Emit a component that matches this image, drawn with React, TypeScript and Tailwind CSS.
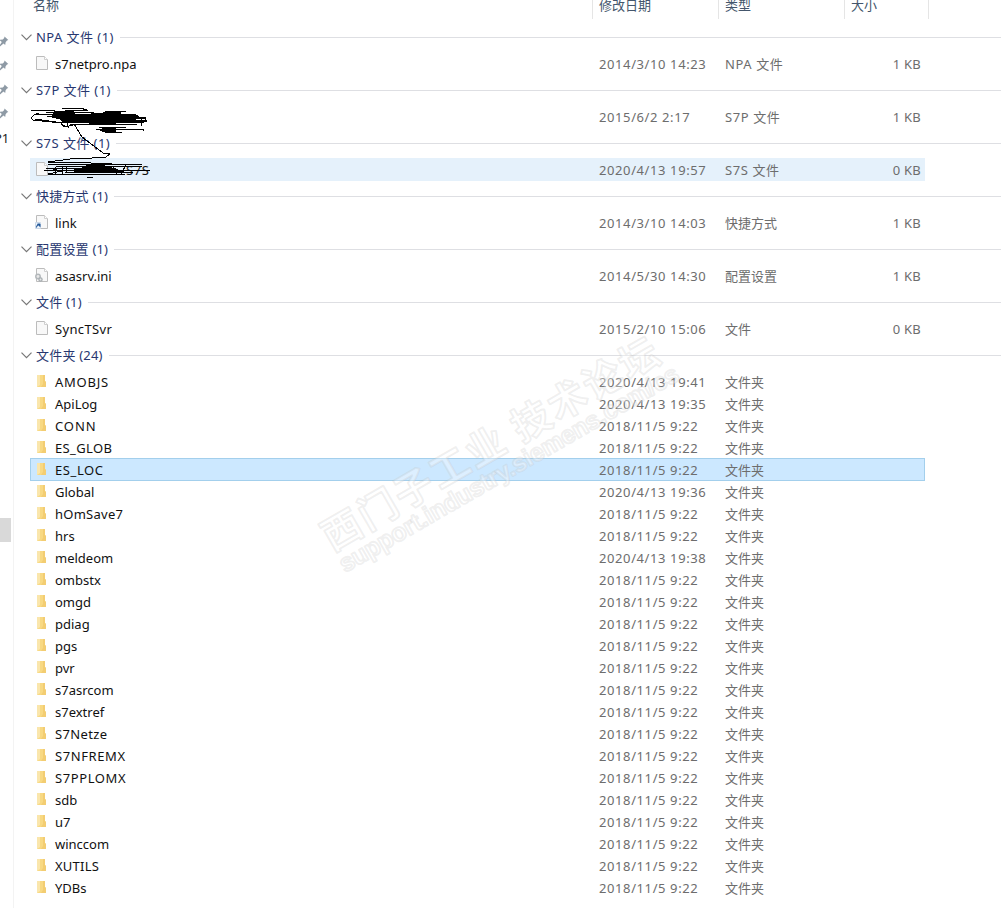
import clsx from "clsx";

type Entry = {
  name: string;
  date: string;
  type: string;
  size?: string;
  icon: "file" | "link" | "ini" | "folder" | "none";
  state?: "hover" | "selected";
};

type Group = { title: string; items: Entry[] };

const folder = (name: string, date = "2018/11/5 9:22"): Entry => ({
  name,
  date,
  type: "文件夹",
  icon: "folder",
});

const groups: Group[] = [
  {
    title: "NPA 文件 (1)",
    items: [{ name: "s7netpro.npa", date: "2014/3/10 14:23", type: "NPA 文件", size: "1 KB", icon: "file" }],
  },
  {
    title: "S7P 文件 (1)",
    items: [{ name: "", date: "2015/6/2 2:17", type: "S7P 文件", size: "1 KB", icon: "none" }],
  },
  {
    title: "S7S 文件 (1)",
    items: [{ name: "S7S", date: "2020/4/13 19:57", type: "S7S 文件", size: "0 KB", icon: "file", state: "hover" }],
  },
  {
    title: "快捷方式 (1)",
    items: [{ name: "link", date: "2014/3/10 14:03", type: "快捷方式", size: "1 KB", icon: "link" }],
  },
  {
    title: "配置设置 (1)",
    items: [{ name: "asasrv.ini", date: "2014/5/30 14:30", type: "配置设置", size: "1 KB", icon: "ini" }],
  },
  {
    title: "文件 (1)",
    items: [{ name: "SyncTSvr", date: "2015/2/10 15:06", type: "文件", size: "0 KB", icon: "file" }],
  },
  {
    title: "文件夹 (24)",
    items: [
      folder("AMOBJS", "2020/4/13 19:41"),
      folder("ApiLog", "2020/4/13 19:35"),
      folder("CONN"),
      folder("ES_GLOB"),
      { ...folder("ES_LOC"), state: "selected" },
      folder("Global", "2020/4/13 19:36"),
      folder("hOmSave7"),
      folder("hrs"),
      folder("meldeom", "2020/4/13 19:38"),
      folder("ombstx"),
      folder("omgd"),
      folder("pdiag"),
      folder("pgs"),
      folder("pvr"),
      folder("s7asrcom"),
      folder("s7extref"),
      folder("S7Netze"),
      folder("S7NFREMX"),
      folder("S7PPLOMX"),
      folder("sdb"),
      folder("u7"),
      folder("winccom"),
      folder("XUTILS"),
      folder("YDBs"),
    ],
  },
];

// the capitals run a little wider than the lower case
function nameTracking(name: string) {
  if (name === "AMOBJS") return "tracking-[0.75px]";
  if (name === "XUTILS") return "tracking-[0.25px]";
  if (name === "CONN") return "tracking-[0.9px]";
  if (name === "ES_GLOB") return "tracking-[0.35px]";
  if (/^[A-Z0-9_]+$/.test(name)) return "tracking-[0.6px]";
  if (name === "SyncTSvr" || name === "S7Netze") return "tracking-[0.35px]";
  if (name === "hOmSave7") return "tracking-[0.25px]";
  return "tracking-normal";
}

function EntryIcon({ kind }: { kind: Entry["icon"] }) {
  if (kind === "none") return <span className="w-4 shrink-0" />;
  if (kind === "folder") {
    return (
      <svg width="16" height="16" viewBox="0 0 16 16" className="-mt-0.5 shrink-0">
        <path d="M3 2h8v6l1 1v5H3z" fill="#f8d983" />
        <path d="M3 2h3v10l-3 2z" fill="#fae6ac" />
        <path d="M9 2h2v6l1 1v5H7l2-3z" fill="#f3cd72" />
      </svg>
    );
  }
  return (
    <svg width="16" height="16" viewBox="0 0 16 16" className="-mt-0.5 shrink-0">
      <path d="M2.500 1.500h8l3 3v10h-11z" fill="#f8f8f8" stroke="#bcbcbc" />
      <path d="M10.500 1.500v3h3" fill="#fff" stroke="#cfcfcf" />
      {kind === "link" && (
        <>
          <path d="M1.500 8.500h5v6h-5z" fill="#edf3fa" stroke="#cbd8e8" />
          <path d="M2.500 13.500c0-2 .8-2.700 2-2.700M3.500 10H6v2.500z" fill="#255a9b" stroke="#255a9b" />
        </>
      )}
      {kind === "ini" && (
        <>
          <circle cx="4" cy="9.500" r="2.200" fill="#e8e8e8" stroke="#b3b8bb" strokeWidth="1.500" />
          <circle cx="6.500" cy="12.500" r="1.600" fill="#e8e8e8" stroke="#a8aeb2" strokeWidth="1.300" />
        </>
      )}
    </svg>
  );
}

function Pin() {
  return (
    <svg width="9" height="11" viewBox="0 0 9 11" className="block">
      <path d="M4.500 .5 8.300 4 7 4.600 5.600 6.300 5.200 9 3.500 7.500 0 10.500V8.800L1.800 6 0 4.600V3.700l2.800-.3L4.200 2z" fill="#8e9aa5" />
    </svg>
  );
}

function Row({ entry }: { entry: Entry }) {
  return (
    <div
      className={clsx(
        "-mt-px ml-[16px] flex h-[23px] w-[895px] items-center border pl-[3px] whitespace-pre",
        entry.state === "hover" && "border-[#e5f1fb] bg-[#e5f1fb]",
        entry.state === "selected" && "border-[#a3cfec] bg-[#cce8ff]",
        !entry.state && "border-transparent",
      )}
    >
      <EntryIcon kind={entry.icon} />
      <span
        className={clsx(
          "w-[549px] shrink-0 text-[#111]",
          entry.name === "S7S" ? "pl-[76px]" : "pl-[5px]",
          nameTracking(entry.name),
        )}
      >
        {entry.name}
      </span>
      <span className="w-[126px] shrink-0 text-[#6d6d6d] tracking-[0.6px]">{entry.date}</span>
      <span className={clsx("w-[126px] shrink-0 text-[#6d6d6d]", /^[A-Z]/.test(entry.type) && "tracking-[0.6px]")}>
        {entry.type}
      </span>
      <span className="w-[70px] shrink-0 text-right text-[#6d6d6d] tracking-[0.25px]">{entry.size}</span>
    </div>
  );
}

// hand-drawn strokes that hide two of the names
function Scribbles() {
  return (
    <svg
      width="160"
      height="90"
      viewBox="0 100 160 90"
      className="pointer-events-none absolute top-[100px] left-0"
      fill="none"
      stroke="#000"
      shapeRendering="crispEdges"
    >
      <path d="M31 110.500h24M62 108.500h20l6 2H65M46 112.500h48M39 113c-6 1-9 5-6 7l28 3 3 4 14-3M34 114.500h95M35 119l28 4M47 116h92M60 122h84M62 125l6 2-1-5M110 111.500h16M120 114h14M100 116h37l-13 2h20M110 120h37M70 124h67M99 127.500h27M96 129.500h47v1M100 131l11-2h22M105 132.500h17M74 124l8 13 12 9 9 7 7 1-4 3-14 1-22 1-22 3" />
      <path d="M55 111h18l2 3h16l12-1 4-2h12l2 3h14v8l-10-1-8 2-9-1-17 1-12-1-6-1-10 1-3-3-8-2z" fill="#000" />
      <path d="M69 115h20v7h-20zM90 116h25v8H90zM118 116h20M122 118h24M119 121h28" strokeWidth="2" />
      <path d="M141.500 117v9M142 117.500h3.500v4H142" />
      <path d="M102 128h13v3h-13" fill="#000" />
      <path d="M48 162.500h43M48 164.500h94M91 163.500h19M56 166.500h86M46 168.500h60M44 170.500h106M50 174.500h75M65 172.500h68M48 168l14 3-14 3h75M87 177.500h6M55 167v7M62 166v8M66 166v7M126 165l-5 9M113 166l4 8" />
      <path d="M74 168h8l6-3h15l4 2 9 2 4 3H84l-10-1z" fill="#000" />
      <path d="M74 170h44M92 164h20M104 172h20" strokeWidth="2" />
    </svg>
  );
}

function Watermark() {
  return (
    <svg
      width="400"
      height="280"
      viewBox="300 320 400 280"
      className="pointer-events-none absolute top-[320px] left-[300px]"
    >
      <g fill="#fff" fillOpacity="0.35" stroke="#bdbdbd" strokeOpacity="0.24" strokeWidth="1.800" strokeLinejoin="round">
        <text
          transform="translate(332 552) rotate(-30)"
          textLength="382"
          className="font-['Noto_Sans_CJK_SC',sans-serif] text-[39px] font-bold"
        >
          西门子工业 技术论坛
        </text>
        <text
          transform="translate(345 573) rotate(-30)"
          textLength="388"
          className="font-['Liberation_Sans',sans-serif] text-[25px] font-bold"
        >
          support.industry.siemens.com/cs
        </text>
      </g>
    </svg>
  );
}

export default function App() {
  return (
    <div className="relative flex h-[908px] w-[1001px] overflow-hidden bg-white font-['Noto_Sans','Noto_Sans_CJK_SC',sans-serif] text-[13px] leading-[20px]">
      <aside className="flex w-[14px] shrink-0 flex-col overflow-hidden border-r border-[#f3f3f3] pt-[36px]">
        <div className="flex flex-col gap-[13px]">
          <Pin />
          <Pin />
          <Pin />
          <Pin />
        </div>
        <div className="mt-[9px] -ml-[6px] whitespace-nowrap text-[#222]">P1</div>
        <div className="mt-[370px] h-6 w-[11px] shrink-0 bg-[#d9d9d9]" />
      </aside>

      <main className="min-w-0 flex-1">
        <header className="flex h-[22px] text-[#44566c]">
          <div className="-mt-[5px] h-6 w-[579px] border-r border-[#e5e5e5] pl-[19px]">名称</div>
          <div className="-mt-[5px] h-6 w-[126px] border-r border-[#e5e5e5] pl-[6px]">修改日期</div>
          <div className="-mt-[5px] h-6 w-[126px] border-r border-[#e5e5e5] pl-[6px]">类型</div>
          <div className="-mt-[5px] h-6 w-[84px] border-r border-[#e5e5e5] pl-[6px]">大小</div>
        </header>

        {groups.map((group) => (
          <section key={group.title}>
            <div className="flex h-[31px] items-center pl-[7px] text-[#27376f]">
              <svg width="11" height="7" viewBox="0 0 11 7" fill="none" stroke="#777" strokeWidth="1.200" className="mr-1">
                <path d="M.5.700 5.500 5.700l5-5" />
              </svg>
              <span
                className={clsx(
                  "-mt-0.5 whitespace-nowrap",
                  /^[A-Z]/.test(group.title) ? "tracking-[0.45px]" : "tracking-[0.2px]",
                )}
              >
                {group.title}
              </span>
              <span className="ml-[6px] h-px flex-1 bg-[#dedfe3]" />
            </div>
            {group.items.map((entry) => (
              <Row key={entry.date + entry.name} entry={entry} />
            ))}
          </section>
        ))}
      </main>

      <Scribbles />
      <Watermark />
    </div>
  );
}
